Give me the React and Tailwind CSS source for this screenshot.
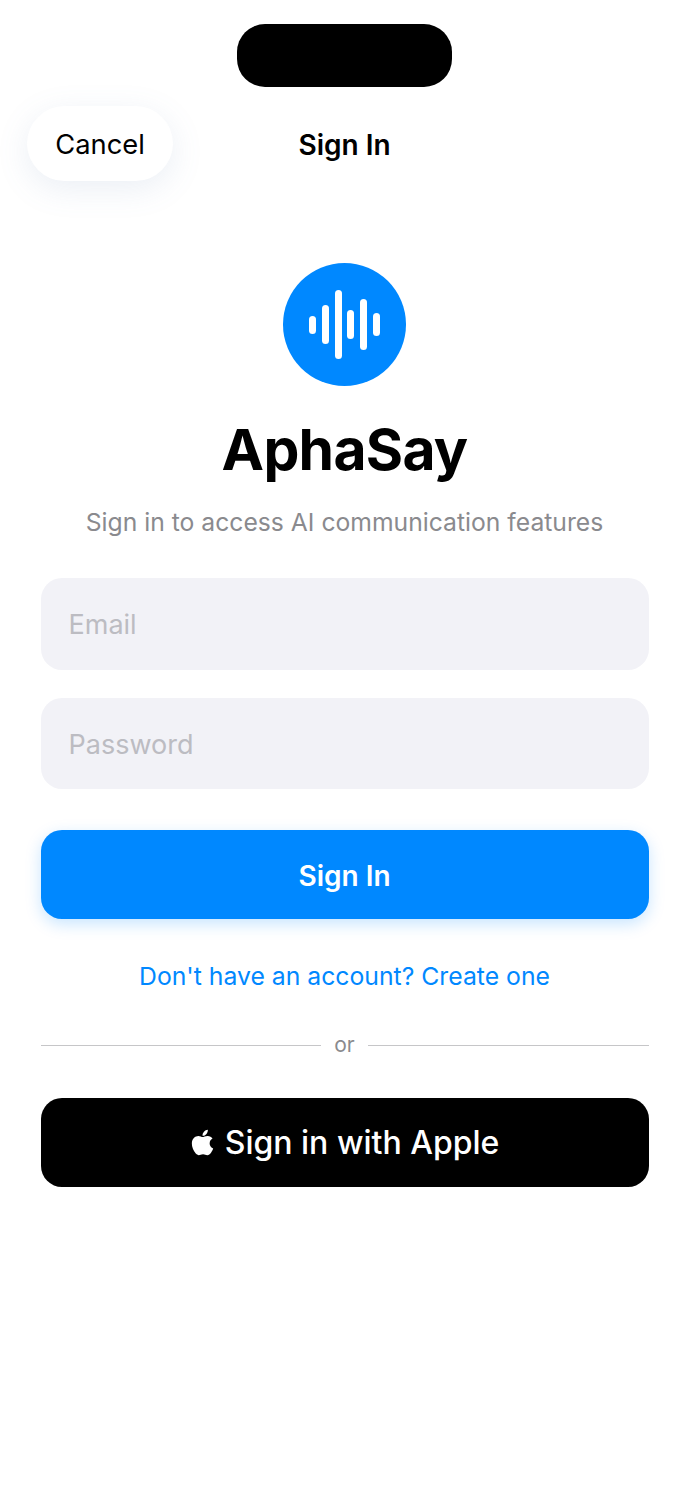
import { FaApple } from "react-icons/fa";

const bars = [18, 39, 69, 29, 51, 23];

function Logo() {
  return (
    <div className="w-[123px] h-[123px] rounded-full bg-[#0088ff] flex items-center justify-center gap-[5.5px]">
      {bars.map((h, i) => (
        <div
          key={i}
          className="w-[7.2px] rounded-full bg-white"
          style={{ height: h }}
        />
      ))}
    </div>
  );
}

export default function App() {
  return (
    <div className="min-h-[1500px] bg-white text-black font-['Inter',sans-serif] flex flex-col items-center">
      {/* notch */}
      <div className="mt-[24px] w-[215px] h-[63px] rounded-[28px] bg-black" />

      {/* nav */}
      <div className="mt-[19px] w-full h-[75px] pl-[27px] flex items-center relative">
        <button className="w-[146px] h-[75px] pt-[3px] rounded-full bg-white text-[27.3px] leading-none shadow-[0_8px_32px_rgba(100,130,180,0.13)]">
          Cancel
        </button>
        <div className="absolute left-0 right-0 pt-[3px] text-center text-[28px] leading-none font-semibold pointer-events-none">
          Sign In
        </div>
      </div>

      <div className="mt-[82px]">
        <Logo />
      </div>

      <h1 className="mt-[29px] text-[57px] leading-[70px] font-bold tracking-[-0.7px]">
        AphaSay
      </h1>
      <p className="mt-[21px] text-[24.7px] leading-[32px] text-[#8a8a8e]">
        Sign in to access AI communication features
      </p>

      {/* form */}
      <div className="mt-[40px] w-[608px] flex flex-col">
        <div className="h-[92px] pt-[3px] rounded-[21px] bg-[#f2f2f7] px-[28px] flex items-center text-[27px] text-[#bcbcc2]">
          Email
        </div>
        <div className="mt-[28px] h-[91px] pt-[3px] rounded-[21px] bg-[#f2f2f7] px-[28px] flex items-center text-[27px] text-[#bcbcc2]">
          Password
        </div>
        <button className="mt-[41px] h-[89px] pt-[2px] rounded-[21px] bg-[#0088ff] text-white text-[28px] font-semibold shadow-[0_5px_16px_rgba(0,136,255,0.22)]">
          Sign In
        </button>
        <div className="mt-[41px] text-center text-[24.75px] leading-[32px] text-[#0088ff]">
          Don't have an account? Create one
        </div>
        <div className="mt-[37px] flex items-center h-[32px]">
          <div className="flex-1 h-px bg-[#c6c6c8]" />
          <span className="w-[47px] text-center text-[21px] text-[#8a8a8e]">or</span>
          <div className="flex-1 h-px bg-[#c6c6c8]" />
        </div>
        <button className="mt-[37px] h-[89px] rounded-[21px] bg-black text-white flex items-center justify-center gap-[10px] text-[32px] font-medium">
          <FaApple className="w-[25px] h-[29px]" />
          Sign in with Apple
        </button>
      </div>
    </div>
  );
}
